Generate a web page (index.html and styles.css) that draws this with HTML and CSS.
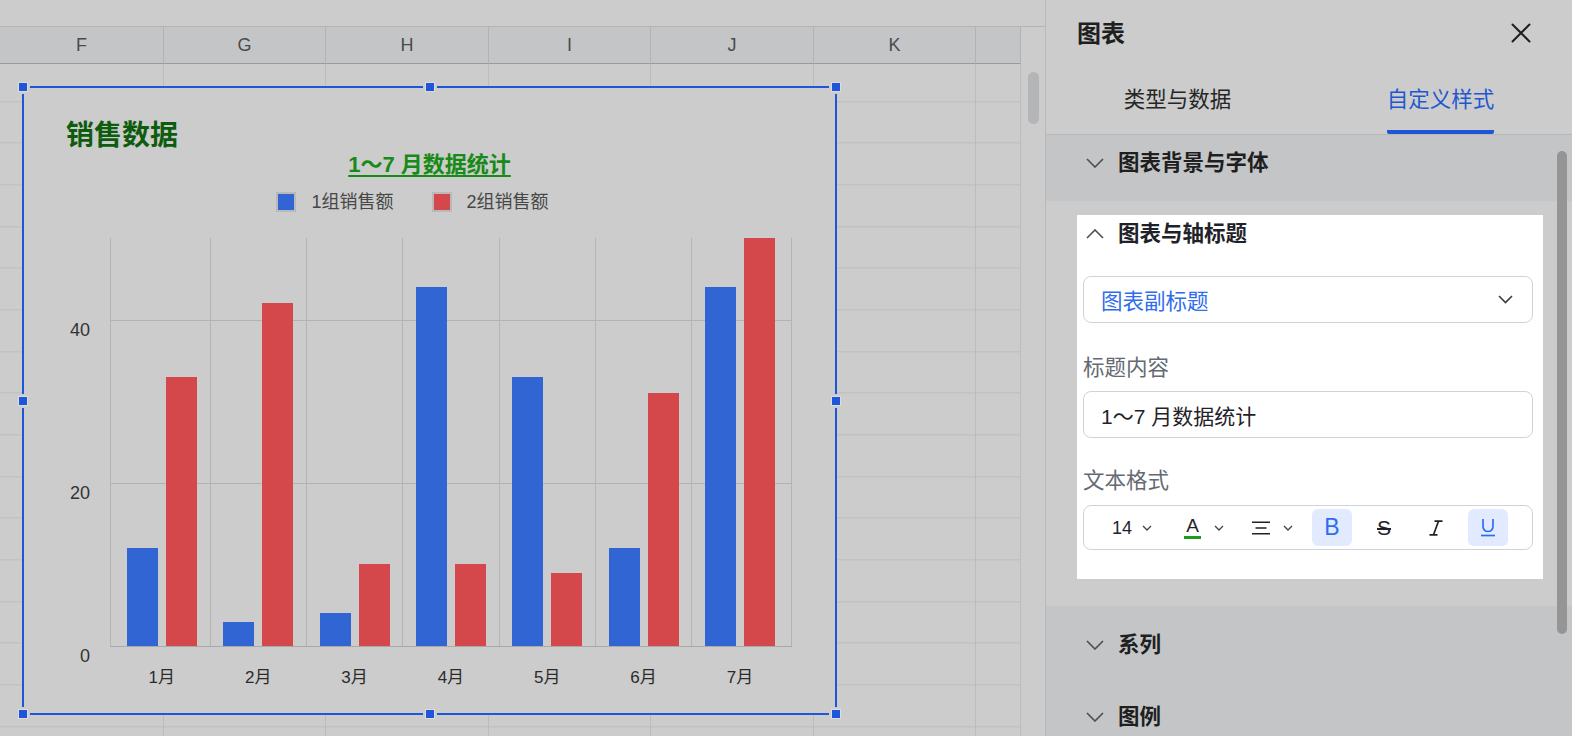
FILE: index.html
```html
<!DOCTYPE html>
<html lang="zh-CN">
<head>
<meta charset="utf-8">
<title>图表</title>
<link rel="stylesheet" href="styles.css">
</head>
<body>
<div class="app">
  <section class="sheet">
    <div class="sheet-top"></div>
    <div class="col-head">
      <div class="ch w1">F</div>
      <div class="ch w2">G</div>
      <div class="ch w3">H</div>
      <div class="ch w2">I</div>
      <div class="ch w3">J</div>
      <div class="ch w2">K</div>
      <div class="ch w4"></div>
      <div class="ch-track"></div>
    </div>
    <div class="grid">
      <div class="cols">
        <div class="gc w1"></div>
        <div class="gc w2"></div>
        <div class="gc w3"></div>
        <div class="gc w2"></div>
        <div class="gc w3"></div>
        <div class="gc w2"></div>
        <div class="gc w4"></div>
      </div>
      <div class="track"><div class="vthumb"></div></div>

      <div class="chart">
        <span class="hd h-tl"></span><span class="hd h-tc"></span><span class="hd h-tr"></span>
        <span class="hd h-ml"></span><span class="hd h-mr"></span>
        <span class="hd h-bl"></span><span class="hd h-bc"></span><span class="hd h-br"></span>

        <div class="c-title">销售数据</div>
        <div class="c-sub"><span>1～7 月数据统计</span></div>
        <div class="legend">
          <div class="lg"><i class="sw sw-blue"></i><span>1组销售额</span></div>
          <div class="lg"><i class="sw sw-red"></i><span>2组销售额</span></div>
        </div>
        <div class="plot-wrap">
          <div class="yaxis"><div class="yl">40</div><div class="yl">20</div><div class="yl">0</div></div>
          <div class="plot">
            <div class="cat"><i class="bar b" style="height:24%"></i><i class="bar r" style="height:66%"></i></div>
            <div class="cat"><i class="bar b" style="height:6%"></i><i class="bar r" style="height:84%"></i></div>
            <div class="cat"><i class="bar b" style="height:8%"></i><i class="bar r" style="height:20%"></i></div>
            <div class="cat"><i class="bar b" style="height:88%"></i><i class="bar r" style="height:20%"></i></div>
            <div class="cat"><i class="bar b" style="height:66%"></i><i class="bar r" style="height:18%"></i></div>
            <div class="cat"><i class="bar b" style="height:24%"></i><i class="bar r" style="height:62%"></i></div>
            <div class="cat"><i class="bar b" style="height:88%"></i><i class="bar r" style="height:100%"></i></div>
          </div>
        </div>
        <div class="xaxis">
          <span class="xl">1月</span><span class="xl">2月</span><span class="xl">3月</span><span class="xl">4月</span><span class="xl">5月</span><span class="xl">6月</span><span class="xl">7月</span>
        </div>
      </div>
    </div>
  </section>

  <aside class="panel">
    <div class="p-head">
      <div class="p-title">图表</div>
      <svg class="close" width="20" height="20" viewBox="0 0 20 20"><path d="M1.5 1.5L18.5 18.5M18.5 1.5L1.5 18.5" stroke="#1f1f1f" stroke-width="2" fill="none" stroke-linecap="round"/></svg>
    </div>
    <div class="tabs">
      <div class="tab"><span class="tab-label">类型与数据</span></div>
      <div class="tab active"><span class="tab-label">自定义样式</span></div>
    </div>
    <div class="p-body">
      <div class="sec-head first">
        <svg class="chev" width="18" height="10" viewBox="0 0 18 10"><polyline points="1,1 9,9 17,1" fill="none" stroke="#4b4d50" stroke-width="1.6"/></svg>
        <span>图表背景与字体</span>
      </div>
      <div class="sec-body">
        <div class="spot">
          <div class="spot-head">
            <svg class="chev" width="18" height="10" viewBox="0 0 18 10"><polyline points="1,9 9,1 17,9" fill="none" stroke="#4b4d50" stroke-width="1.6"/></svg>
            <span>图表与轴标题</span>
          </div>
          <div class="select">
            <span>图表副标题</span>
            <svg width="15" height="9" viewBox="0 0 15 9"><polyline points="1,1 7.5,7.5 14,1" fill="none" stroke="#3a3d42" stroke-width="1.6"/></svg>
          </div>
          <div class="field-label">标题内容</div>
          <div class="input">1～7 月数据统计</div>
          <div class="field-label">文本格式</div>
          <div class="toolbar">
            <span class="t-size">14</span>
            <svg class="t-chev c1" width="10" height="6" viewBox="0 0 10 6"><polyline points="1,1 5,5 9,1" fill="none" stroke="#444" stroke-width="1.3"/></svg>
            <span class="t-color">A</span>
            <svg class="t-chev c2" width="10" height="6" viewBox="0 0 10 6"><polyline points="1,1 5,5 9,1" fill="none" stroke="#444" stroke-width="1.3"/></svg>
            <svg class="t-align" width="18" height="14" viewBox="0 0 18 14"><path d="M0 1.2H18M3.5 7H14.5M0 12.8H18" stroke="#222" stroke-width="1.6" fill="none"/></svg>
            <svg class="t-chev c3" width="10" height="6" viewBox="0 0 10 6"><polyline points="1,1 5,5 9,1" fill="none" stroke="#444" stroke-width="1.3"/></svg>
            <span class="t-btn on t-b">B</span>
            <span class="t-btn t-s"><s>S</s></span>
            <span class="t-btn t-i"><svg width="14" height="16" viewBox="0 0 14 16"><path d="M5.5 1.2H13.5M0.5 14.8H8.5M9.5 1.2L4.5 14.8" stroke="#222" stroke-width="1.7" fill="none"/></svg></span>
            <span class="t-btn on t-u"><svg width="16" height="19" viewBox="0 0 16 19"><path d="M3 1V8.5A5 5 0 0 0 13 8.5V1" stroke="#2f6ded" stroke-width="1.7" fill="none"/><path d="M1 17.5H15" stroke="#2f6ded" stroke-width="1.7"/></svg></span>
          </div>
        </div>
      </div>
      <div class="sec-head">
        <svg class="chev" width="18" height="10" viewBox="0 0 18 10"><polyline points="1,1 9,9 17,1" fill="none" stroke="#4b4d50" stroke-width="1.6"/></svg>
        <span>系列</span>
      </div>
      <div class="sec-head">
        <svg class="chev" width="18" height="10" viewBox="0 0 18 10"><polyline points="1,1 9,9 17,1" fill="none" stroke="#4b4d50" stroke-width="1.6"/></svg>
        <span>图例</span>
      </div>
    </div>
    <div class="p-thumb"></div>
  </aside>
</div>
</body>
</html>
```
FILE: styles.css
```css
* { box-sizing: border-box; margin: 0; padding: 0; }
html, body { width: 1572px; height: 736px; overflow: hidden; }
body {
  background: #cccccc;
  font-family: "Liberation Sans", "Noto Sans CJK SC", sans-serif;
  color: #1f1f1f;
}
.app { display: flex; width: 1572px; height: 736px; overflow: hidden; }

/* ---------- spreadsheet ---------- */
.sheet { width: 1045px; flex: none; display: flex; flex-direction: column; }
.sheet-top { height: 27px; border-bottom: 1px solid #b5b5b5; }
.col-head { display: flex; height: 37px; }
.ch {
  height: 37px;
  background: #c4c5c7;
  border-right: 1px solid #b3b3b3;
  border-bottom: 1px solid #999a9c;
  display: flex; align-items: center; justify-content: center;
  font-size: 18px; color: #4a4b4d;
}
.ch-track { flex: 1; }
.w1 { width: 164px; }
.w2 { width: 162px; }
.w3 { width: 163px; }
.w4 { width: 45px; }

.grid { flex: 1; display: flex; position: relative; }
.cols {
  display: flex; width: 1021px;
  background-image: repeating-linear-gradient(to bottom, transparent 0, transparent 40.667px, #bcbcbc 40.667px, #bcbcbc 41.667px);
  background-position: 0 -3.667px;
}
.gc { border-right: 1px solid #bcbcbc; }
.track { flex: 1; }
.vthumb {
  margin: 8px 0 0 7px;
  width: 11px; height: 52px;
  border-radius: 6px;
  background: #b4b5b7;
}

/* ---------- chart ---------- */
.chart {
  position: absolute; left: 22px; top: 22px;
  width: 815px; height: 629px;
  border: 2px solid #1d56d8;
  background: #cccccc;
  padding-top: 31px;
}
.hd {
  position: absolute; width: 10px; height: 10px;
  background: #1d56d8; border: 1px solid #dcdcdc;
  box-shadow: 0 0 0 2px #cccccc;
}
.h-tl { left: -6px; top: -6px; }
.h-tc { left: calc(50% - 5px); top: -6px; }
.h-tr { right: -6px; top: -6px; }
.h-ml { left: -6px; top: calc(50% - 5px); }
.h-mr { right: -6px; top: calc(50% - 5px); }
.h-bl { left: -6px; bottom: -6px; }
.h-bc { left: calc(50% - 5px); bottom: -6px; }
.h-br { right: -6px; bottom: -6px; }

.c-title {
  margin-left: 42px;
  font-size: 28px; line-height: 34px; font-weight: 700;
  color: #0e5c0e;
}
.c-sub {
  text-align: center;
  font-size: 22px; line-height: 24px; font-weight: 700;
  color: #178a17;
}
.c-sub span {
  text-decoration: underline; text-decoration-thickness: 2px; text-underline-offset: 3px;
}
.legend {
  margin-top: 13px; height: 24px;
  display: flex; justify-content: center; align-items: center; gap: 38px;
  padding-right: 34px;
  font-size: 18px; color: #474747;
}
.lg { display: flex; align-items: center; gap: 15px; line-height: 24px; }
.sw { display: block; width: 20px; height: 20px; border: 2px solid #b9b9b9; }
.sw-blue { background: #3265d4; }
.sw-red { background: #d4484c; }

.plot-wrap { display: flex; margin-top: 24px; }
.yaxis { width: 66px; margin-right: 20px; height: 409px; }
.yl {
  height: 163.2px; line-height: 18px;
  text-align: right; font-size: 18px; color: #333;
}
.yl:first-child { margin-top: 82.5px; }
.plot {
  width: 682px; height: 409px;
  display: flex;
  border-bottom: 1px solid #a9a9a9;
  background-image: repeating-linear-gradient(to top, transparent 0, transparent 162.2px, #b2b2b2 162.2px, #b2b2b2 163.2px);
}
.cat {
  flex: 0 0 96.35px;
  display: flex; align-items: flex-end; justify-content: center; gap: 8px;
  border-left: 1px solid #b4b4b4;
}
.cat:first-child { flex-basis: 99.5px; padding-left: 3px; }
.cat:last-child { flex-basis: 100.4px; border-right: 1px solid #b4b4b4; padding-right: 3px; }
.bar { display: block; width: 31px; }
.bar.b { background: #3265d4; }
.bar.r { background: #d4484c; }

.xaxis {
  display: flex; margin-left: 86px; width: 682px; margin-top: 21px;
  font-size: 17px; line-height: 20px; color: #2b2b2b;
}
.xl { flex: 0 0 96.35px; text-align: center; padding-left: 1px; }
.xl:first-child { flex-basis: 99.5px; padding-left: 4px; }
.xl:last-child { flex-basis: 100.4px; padding-right: 4px; }

/* ---------- panel ---------- */
.panel {
  width: 527px; flex: none;
  border-left: 1px solid #b9b9b9;
  position: relative; overflow: hidden;
  display: flex; flex-direction: column;
}
.p-head {
  height: 64px; flex: none;
  display: flex; align-items: center; justify-content: space-between;
  padding: 0 41px 0 31px;
}
.p-title { font-size: 24px; line-height: 30px; font-weight: 600; margin-top: 3px; }
.close { display: block; margin-top: 1px; }

.tabs { height: 71px; flex: none; display: flex; border-bottom: 1px solid #b8b8b8; }
.tab { flex: 1; display: flex; justify-content: center; align-items: flex-end; }
.tab-label {
  font-size: 21.5px; line-height: 30px;
  padding-bottom: 15px;
  border-bottom: 4px solid transparent;
  color: #262626;
}
.tab.active .tab-label { color: #1f57d0; border-bottom-color: #1e56d6; border-radius: 2px; }

.p-body { flex: 1; min-height: 0; overflow: hidden; display: flex; flex-direction: column; }
.sec-head {
  flex: none;
  display: flex; align-items: center; gap: 14px;
  padding: 24px 0 18px 40px;
  background: #c4c5c7;
  font-size: 21.5px; line-height: 30px; font-weight: 600; color: #1f1f1f;
}
.sec-head.first { padding-top: 13px; padding-bottom: 23px; }
.chev { display: block; flex: none; }

.sec-body { flex: none; padding: 14px 29px 27px 31px; background: #cccccc; }
.spot { background: #ffffff; padding: 4px 10px 29px 6px; }
.spot-head {
  display: flex; align-items: center; gap: 14px; padding-left: 3px;
  font-size: 21.5px; line-height: 30px; font-weight: 600; color: #1f2329;
}
.select {
  margin-top: 27px; height: 47px;
  border: 1px solid #d0d3d6; border-radius: 8px;
  display: flex; align-items: center; justify-content: space-between;
  padding: 0 19px 0 17px;
  font-size: 21.5px; color: #2f6ded;
}
.select svg { display: block; }
.field-label { margin-top: 30px; font-size: 21.5px; line-height: 30px; color: #646a73; }
.field-label + .toolbar { margin-top: 9px; }
.input {
  margin-top: 8px; height: 47px;
  border: 1px solid #d0d3d6; border-radius: 8px;
  display: flex; align-items: center; padding-left: 17px;
  font-size: 21px; color: #1f2329;
}
.input + .field-label { margin-top: 28px; }
.toolbar {
  height: 45px;
  border: 1px solid #d0d3d6; border-radius: 8px;
  display: flex; align-items: center;
}
.t-size { margin-left: 28px; font-size: 18px; line-height: 20px; color: #1f2329; }
.t-chev { display: block; flex: none; }
.t-chev.c1 { margin-left: 10px; }
.t-color {
  margin-left: 32px; width: 17px; text-align: center;
  font-size: 19px; line-height: 19px; color: #1f2329;
  border-bottom: 3px solid #1e9a1e;
  padding-bottom: 1px;
}
.t-chev.c2 { margin-left: 13px; }
.t-align { display: block; margin-left: 28px; }
.t-chev.c3 { margin-left: 13px; }
.t-btn {
  width: 40px; height: 37px; border-radius: 6px;
  display: flex; align-items: center; justify-content: center;
  margin-left: 12px; color: #1f2329;
}
.t-btn svg { display: block; }
.t-btn.on { background: #e1eaff; }
.t-b { margin-left: 19px; font-size: 23px; color: #2f6ded; }
.t-s { font-size: 21px; }
.t-s s { text-decoration-thickness: 1.6px; }

.p-thumb {
  position: absolute; right: 5px; top: 151px;
  width: 10px; height: 483px; border-radius: 5px;
  background: #959595;
}
```
